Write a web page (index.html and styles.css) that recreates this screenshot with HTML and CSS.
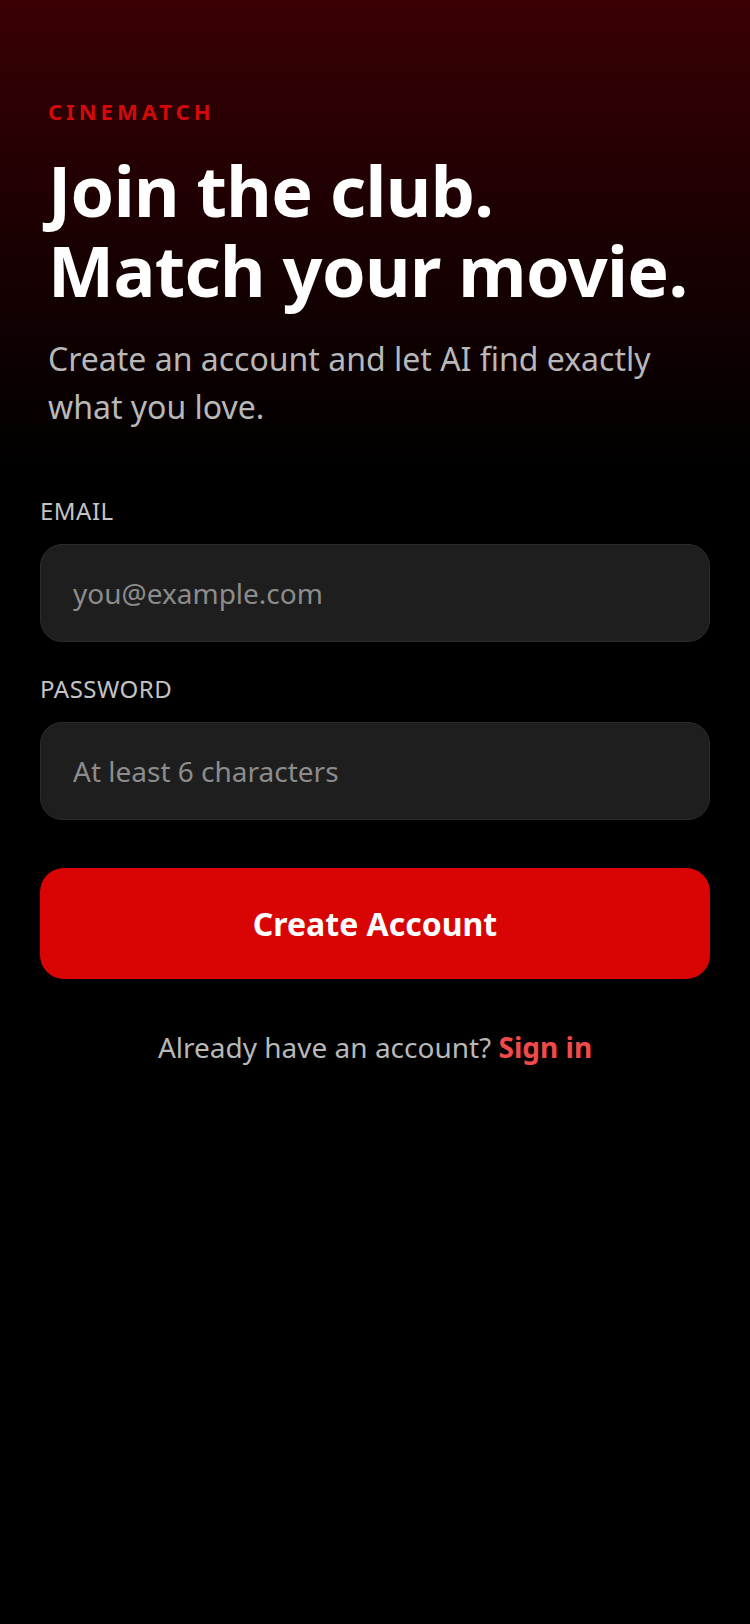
FILE: index.html
```html
<!DOCTYPE html>
<html lang="en">
<head>
    <meta charset="UTF-8">
    <meta name="viewport" content="width=device-width, initial-scale=1.0">
    <title>Sign up - CineMatch</title>
    <link rel="stylesheet" href="styles.css">
</head>
<body>
    <div class="screen">
        <div class="hero">
            <div class="brand">CINEMATCH</div>
            <h1 class="title">Join the club.<br>Match your movie.</h1>
            <p class="subtitle">Create an account and let AI find exactly what you love.</p>
        </div>

        <form class="signup-form" onsubmit="return false;">
            <label class="field-label" for="email">EMAIL</label>
            <input class="field-input" type="email" id="email" placeholder="you@example.com">

            <label class="field-label field-label-next" for="password">PASSWORD</label>
            <input class="field-input" type="password" id="password" placeholder="At least 6 characters">

            <button class="btn-primary" type="submit">Create Account</button>
        </form>

        <p class="footer-text">Already have an account? <a class="link" href="#">Sign in</a></p>
    </div>
</body>
</html>
```

FILE: styles.css
```css
* {
    box-sizing: border-box;
}
body {
    font-family: 'Noto Sans', 'Open Sans', sans-serif;
    background: #000 linear-gradient(to bottom, #3a0004 0, #1a0002 240px, #000 470px) no-repeat;
    color: #fff;
    margin: 0;
    min-height: 1624px;
}
.screen {
    padding: 96px 40px 0;
}
.hero {
    padding: 0 8px;
}
.brand {
    font-size: 22px;
    line-height: 30px;
    font-weight: bold;
    letter-spacing: 4px;
    color: #d40a0a;
}
.title {
    margin: 24px 0 0;
    font-size: 70px;
    line-height: 80px;
    font-weight: bold;
    letter-spacing: -0.6px;
    color: #fff;
}
.subtitle {
    margin: 25px 0 0;
    font-size: 32px;
    line-height: 48px;
    color: #b8b8b8;
}
.signup-form {
    display: flex;
    flex-direction: column;
    margin-top: 64px;
}
.field-label {
    font-size: 24px;
    line-height: 32px;
    letter-spacing: 0.5px;
    color: #c4c4c4;
    margin-bottom: 17px;
}
.field-label-next {
    margin-top: 31px;
}
.field-input {
    height: 98px;
    padding: 0 32px;
    background: #1e1e1e;
    border: 1.5px solid #2b2b2b;
    border-radius: 22px;
    font-family: inherit;
    font-size: 28px;
    color: #fff;
    outline: none;
}
.field-input::placeholder {
    color: #8c8c8c;
}
.btn-primary {
    margin-top: 48px;
    height: 111px;
    background-color: #d90505;
    color: #fff;
    border: none;
    border-radius: 24px;
    font-family: inherit;
    font-size: 32px;
    font-weight: bold;
    cursor: pointer;
}
.footer-text {
    margin: 48px 0 0;
    text-align: center;
    font-size: 28px;
    line-height: 40px;
    color: #b8b8b8;
}
.link {
    color: #f04a4a;
    font-weight: bold;
    text-decoration: none;
}
```
